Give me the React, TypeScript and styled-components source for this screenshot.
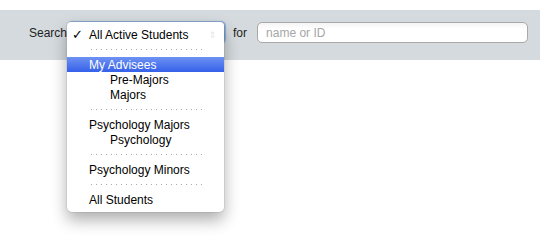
import React from "react";
import styled, { createGlobalStyle } from "styled-components";

const Global = createGlobalStyle`
  html, body { margin: 0; padding: 0; background: #fff; }
  body { font-family: "Liberation Sans", Arial, sans-serif; font-size: 12px; }
`;

const Page = styled.div`
  padding-top: 10px;
  height: 244px;
  box-sizing: border-box;
`;

const Bar = styled.div`
  width: 540px;
  height: 50px;
  box-sizing: border-box;
  background: #d4dadd;
  display: flex;
  align-items: flex-start;
  padding: 12px 0 0 29px;
`;

const Label = styled.span<{ $ml?: number }>`
  margin-top: 4px;
  margin-left: ${(p) => p.$ml ?? 0}px;
  line-height: 15px;
  font-size: 12px;
  color: #1e1e1e;
`;

const SelectWrap = styled.div`
  position: relative;
  margin-left: 1px;
  width: 157px;
  height: 21px;
`;

const SelectBox = styled.div`
  width: 157px;
  height: 21px;
  box-sizing: border-box;
  border: 1px solid #7fa3cf;
  border-radius: 4px;
  background: #fff;
  box-shadow: 0 0 1px 1px rgba(110, 150, 215, 0.7);
`;

const Menu = styled.div`
  position: absolute;
  left: -1px;
  top: 0;
  width: 157px;
  background: #fff;
  border-radius: 4px 4px 5px 5px;
  padding: 5px 0 5px;
  box-shadow: 0 0 0 1px rgba(0, 0, 0, 0.06), 0 8px 16px rgba(0, 0, 0, 0.32);
  z-index: 2;
`;

const Item = styled.div<{ $indent?: boolean; $active?: boolean }>`
  position: relative;
  height: 15px;
  line-height: 17px;
  font-size: 12px;
  white-space: nowrap;
  padding-left: ${(p) => (p.$indent ? 43 : 22)}px;
  color: ${(p) => (p.$active ? "#fff" : "#000")};
  background: ${(p) =>
    p.$active ? "linear-gradient(#6e92f2, #3560ea)" : "transparent"};
`;

const Check = styled.span`
  position: absolute;
  left: 5px;
  top: 0;
  font-family: "DejaVu Sans", sans-serif;
  font-size: 13px;
  font-weight: bold;
  line-height: 16px;
`;

const Arrows = styled.span`
  position: absolute;
  right: 8px;
  top: 0;
  font-family: "DejaVu Sans", sans-serif;
  font-size: 9px;
  color: #e6e6e6;
`;

const Sep = styled.div`
  height: 15px;
  display: flex;
  align-items: center;
  padding-left: 24px;
  &::after {
    content: "";
    display: block;
    width: 113px;
    height: 1px;
    background: repeating-linear-gradient(
      to right,
      #a9a9a9 0 1px,
      transparent 1px 5px
    );
  }
`;

const Input = styled.input`
  margin-left: 10px;
  width: 271px;
  height: 21px;
  box-sizing: border-box;
  border: 1px solid #a9a9a9;
  border-radius: 5px;
  background: linear-gradient(#f4f4f4, #fff 6px);
  padding: 0 0 0 8px;
  font-family: "Liberation Sans", Arial, sans-serif;
  font-size: 12px;
  outline: none;
  &::placeholder {
    color: #a6a6a6;
  }
`;

type Row =
  | { kind: "item"; text: string; indent?: boolean; active?: boolean; checked?: boolean }
  | { kind: "sep" };

const rows: Row[] = [
  { kind: "item", text: "All Active Students", checked: true },
  { kind: "sep" },
  { kind: "item", text: "My Advisees", active: true },
  { kind: "item", text: "Pre-Majors", indent: true },
  { kind: "item", text: "Majors", indent: true },
  { kind: "sep" },
  { kind: "item", text: "Psychology Majors" },
  { kind: "item", text: "Psychology", indent: true },
  { kind: "sep" },
  { kind: "item", text: "Psychology Minors" },
  { kind: "sep" },
  { kind: "item", text: "All Students" },
];

export default function App() {
  return (
    <Page>
      <Global />
      <Bar>
        <Label>Search</Label>
        <SelectWrap>
          <SelectBox />
          <Menu>
            {rows.map((r, i) =>
              r.kind === "sep" ? (
                <Sep key={i} />
              ) : (
                <Item key={i} $indent={r.indent} $active={r.active}>
                  {r.checked && <Check>✓</Check>}
                  {r.text}
                  {i === 0 && <Arrows>⇕</Arrows>}
                </Item>
              )
            )}
          </Menu>
        </SelectWrap>
        <Label $ml={8}>for</Label>
        <Input placeholder="name or ID" />
      </Bar>
    </Page>
  );
}
